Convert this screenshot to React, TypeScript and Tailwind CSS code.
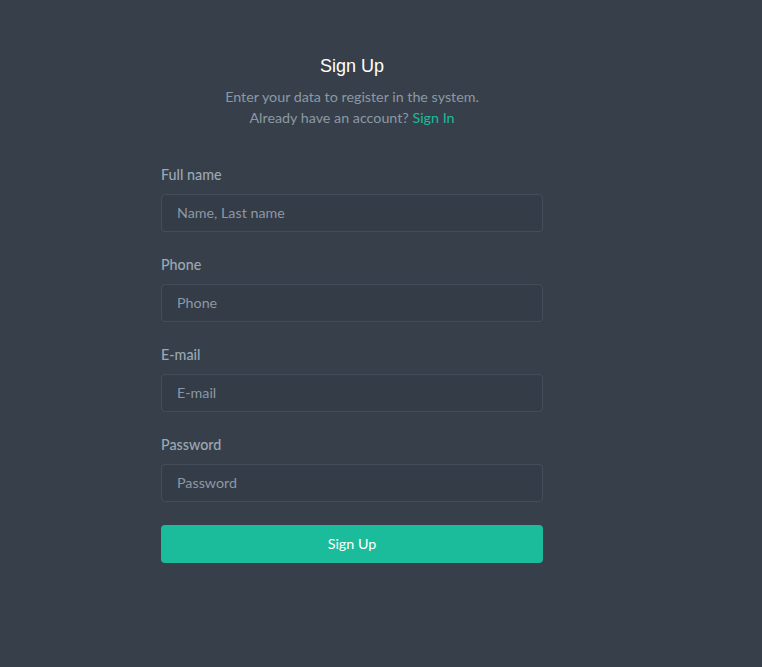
const fields = [
  { label: "Full name", placeholder: "Name, Last name", type: "text" },
  { label: "Phone", placeholder: "Phone", type: "tel" },
  { label: "E-mail", placeholder: "E-mail", type: "email" },
  { label: "Password", placeholder: "Password", type: "password" },
];

const App = () => {
  return (
    <div className="min-h-[667px] w-full bg-[#37404a] font-['Lato','Noto_Sans',sans-serif]">
      <div className="ml-[161px] w-[382px] pt-[55px]">
        <h1 className="text-center font-['Liberation_Sans',Arial,sans-serif] text-[18px] leading-[22px] text-white">
          Sign Up
        </h1>
        <p className="mt-[9px] text-center text-[14.3px] leading-[21px] text-[#8c98a5]">
          Enter your data to register in the system.
          <br />
          Already have an account?{" "}
          <a href="#" className="text-[#1abc9c]">
            Sign In
          </a>
        </p>

        <form className="mt-[37px] flex flex-col gap-[23.5px]" onSubmit={(e) => e.preventDefault()}>
          {fields.map((f) => (
            <div key={f.label}>
              <label className="mb-[9px] block text-[14.3px] font-medium leading-[20px] text-[#9ba8b5]">
                {f.label}
              </label>
              <input
                type={f.type}
                placeholder={f.placeholder}
                className="block h-[37.5px] w-full rounded-[4px] border border-[#444e5a] bg-[#343c47] px-[15px] text-[14.3px] text-[#aab8c5] placeholder:text-[#8c98a5] outline-none"
              />
            </div>
          ))}
          <button
            type="submit"
            className="h-[37.5px] w-full rounded-[4px] bg-[#1abc9c] text-[14.3px] text-white"
          >
            Sign Up
          </button>
        </form>
      </div>
    </div>
  );
};

export default App;
